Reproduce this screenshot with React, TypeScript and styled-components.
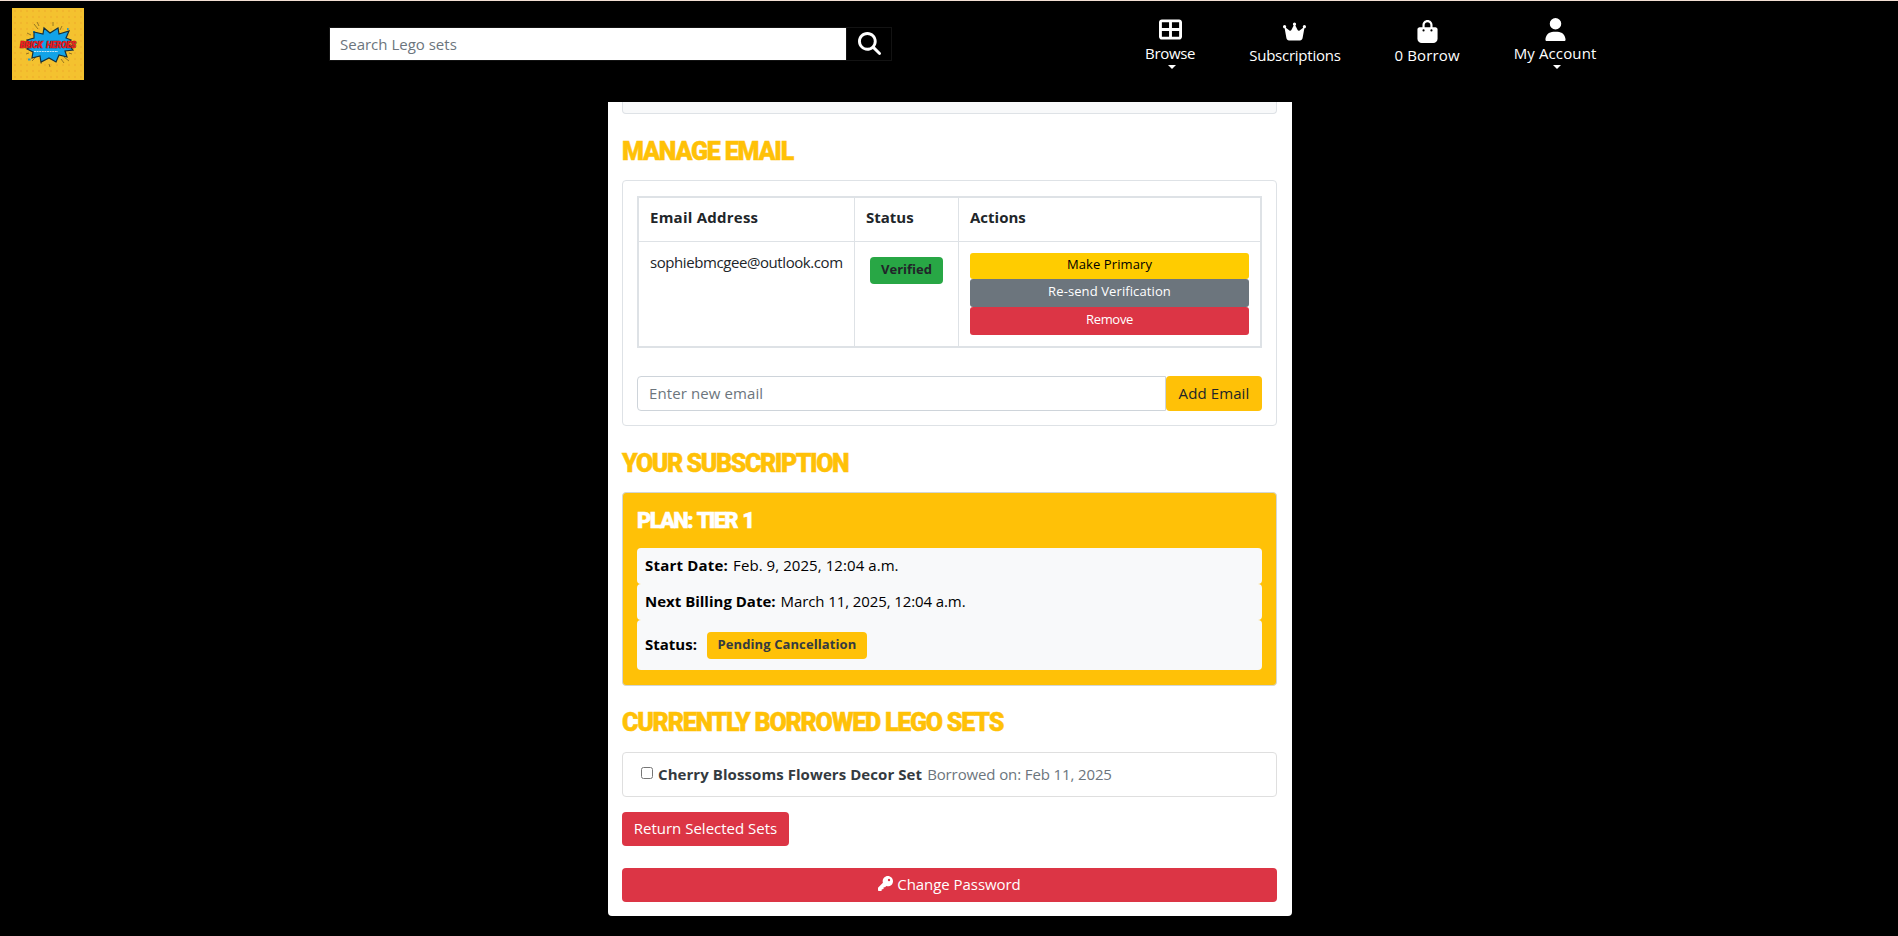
import React from "react";
import styled, { createGlobalStyle } from "styled-components";
import {
  FaBagShopping,
  FaCrown,
  FaKey,
  FaMagnifyingGlass,
  FaTableCellsLarge,
  FaUser,
} from "react-icons/fa6";

const GlobalStyle = createGlobalStyle`
  *, *::before, *::after { box-sizing: border-box; }
  body {
    margin: 0;
    background: #000;
    color: #212529;
    font: 15px/22px "Open Sans", "Noto Sans", sans-serif;
    overflow: hidden;
  }
  input, button { font: inherit; color: inherit; margin: 0; }
`;

const Page = styled.div`
  height: 936px;
  overflow: hidden;
`;

const Header = styled.header`
  display: flex;
  align-items: flex-start;
  height: 102px;
  border-top: 1px solid #f3dfd3;
  padding-left: 12px;
`;

const Logo = styled.svg`
  display: block;
  flex: none;
  width: 72px;
  height: 72px;
  margin-top: 7px;
`;

const Search = styled.form`
  display: flex;
  flex: none;
  width: 563px;
  height: 34px;
  margin: 26px 0 0 245px;
  border: 1px solid #131313;
`;

const SearchInput = styled.input`
  flex: 1;
  min-width: 0;
  border: 0;
  padding: 0 10px 1px;
  background: #fff;
  &::placeholder { color: #6c757d; opacity: 1; }
`;

const SearchButton = styled.button`
  display: flex;
  flex: none;
  align-items: center;
  justify-content: center;
  width: 45px;
  padding: 0 0 2px;
  border: 0;
  border-left: 1px solid #131313;
  background: #000;
  color: #fff;
  svg { width: 23px; height: 23px; }
`;

const Nav = styled.nav`
  display: flex;
  gap: 54px;
  margin-left: 253px;
  color: #fff;
`;

const NavItem = styled.a<{ $top: number }>`
  display: flex;
  flex-direction: column;
  align-items: center;
  padding-top: ${(p) => p.$top}px;
  white-space: nowrap;
  > svg { width: auto; height: 23px; margin-bottom: 1px; }
`;

const Label = styled.span<{ $track?: number }>`
  letter-spacing: ${(p) => p.$track ?? 0}px;
  white-space: nowrap;
`;

const Strong = styled(Label)`
  font-weight: 700;
`;

const Caret = styled.i`
  margin: 1px 0 0 4px;
  border: 4px solid transparent;
  border-top-color: #fff;
  border-bottom: 0;
`;

const Panel = styled.main`
  width: 684px;
  height: 814px;
  margin-left: 608px;
  padding: 0 15px 0 14px;
  border-radius: 0 0 4px 4px;
  background: #fff;
`;

const CardEnd = styled.div`
  height: 12px;
  border: 1px solid #dee2e6;
  border-top: 0;
  border-radius: 0 0 4px 4px;
  background: #f8f9fa;
`;

const Heading = styled.h2<{ $track: number }>`
  height: 30px;
  margin: 23px 0 13px;
  color: #ffc107;
  font: 900 25px/29px Roboto, sans-serif;
  letter-spacing: ${(p) => p.$track}px;
  text-transform: uppercase;
  white-space: nowrap;
  -webkit-text-stroke: 0.5px #ffc107;
`;

const EmailCard = styled.section`
  height: 246px;
  padding: 15px 14px 14px;
  border: 1px solid #dee2e6;
  border-radius: 4px;
`;

const EmailTable = styled.div`
  display: grid;
  grid-template-columns: 216px 104px 1fr;
  grid-template-rows: 44px 104px;
  border: 2px solid #dee2e6;
`;

const HeadCell = styled.div`
  padding: 8px 11px;
  border-bottom: 1px solid #dee2e6;
  font-weight: 700;
  &:not(:nth-child(3)) { border-right: 1px solid #dee2e6; }
`;

const Cell = styled.div`
  padding: 9px 11px;
  border-right: 1px solid #dee2e6;
`;

const StatusCell = styled(Cell)`
  padding: 15px;
`;

const ActionsCell = styled.div`
  display: flex;
  flex-direction: column;
  padding: 11px;
`;

const Badge = styled.span<{ $bg: string; $width: number; $track: number; $color?: string }>`
  display: block;
  flex: none;
  width: ${(p) => p.$width}px;
  height: 27px;
  border-radius: 4px;
  background: ${(p) => p.$bg};
  color: ${(p) => p.$color ?? "#212529"};
  font-size: 13px;
  font-weight: 700;
  line-height: 25px;
  letter-spacing: ${(p) => p.$track}px;
  text-align: center;
  white-space: nowrap;
`;

const ActionButton = styled.button<{ $bg: string; $compact?: boolean; $track?: number }>`
  height: ${(p) => (p.$compact ? 26 : 28)}px;
  padding: 0 0 3px;
  border: 0;
  border-radius: 3px;
  background: ${(p) => p.$bg};
  color: ${(p) => (p.$compact ? "#000" : "#fff")};
  font-size: 13px;
  line-height: ${(p) => (p.$compact ? 23 : 25)}px;
  letter-spacing: ${(p) => p.$track ?? 0}px;
`;

const AddRow = styled.form`
  display: flex;
  height: 35px;
  margin-top: 28px;
`;

const EmailInput = styled.input`
  width: 529px;
  padding: 0 11px 2px;
  border: 1px solid #ced4da;
  border-radius: 4px 0 0 4px;
  background: #fff;
  &::placeholder { color: #6c757d; opacity: 1; letter-spacing: 0.1px; }
`;

const AddButton = styled.button`
  width: 96px;
  padding: 0 0 2px;
  border: 0;
  border-radius: 4px;
  background: #ffc107;
  letter-spacing: 0.1px;
`;

const PlanCard = styled.section`
  height: 194px;
  margin-bottom: -1px;
  padding: 14px;
  border: 1px solid #d3d6d3;
  border-radius: 4px;
  background: #ffc107;
`;

const PlanTitle = styled.h3`
  margin: 0 0 13px;
  color: #fff;
  font: 900 22px/28px Roboto, sans-serif;
  letter-spacing: -1.7px;
  word-spacing: 1.5px;
  text-transform: uppercase;
  -webkit-text-stroke: 0.5px #fff;
`;

const PlanRow = styled.div<{ $tall?: boolean }>`
  display: flex;
  gap: ${(p) => (p.$tall ? 10 : 5)}px;
  height: ${(p) => (p.$tall ? 50 : 36)}px;
  padding: ${(p) => (p.$tall ? "12px" : "6px")} 8px;
  border-radius: 4px;
  background: #f8f9fa;
  color: #000;
`;

const StatusLabel = styled(Strong)`
  padding-top: 1px;
`;

const BorrowedRow = styled.label`
  display: flex;
  align-items: center;
  height: 45px;
  margin-top: 14px;
  padding: 0 18px 2px;
  border: 1px solid #dfdfdf;
  border-radius: 4px;
  color: #343a40;
`;

const Checkbox = styled.input`
  width: 12px;
  height: 12px;
  margin: 0 5px 1px 0;
`;

const BorrowedDate = styled(Label)`
  margin-left: 5px;
  color: #6c757d;
`;

const DangerButton = styled.button<{ $block?: boolean }>`
  display: flex;
  align-items: center;
  justify-content: center;
  gap: 4px;
  width: ${(p) => (p.$block ? "100%" : "167px")};
  height: 34px;
  margin-top: ${(p) => (p.$block ? 22 : 15)}px;
  padding: 0 0 3px;
  border: 0;
  border-radius: 4px;
  background: #dc3545;
  color: #fff;
  svg { width: 15px; height: 15px; }
`;

function BrandLogo() {
  return (
    <Logo viewBox="0 0 72 72" role="img" aria-label="Brick Heroes">
      <defs>
        <pattern id="dots" width="6" height="6" patternUnits="userSpaceOnUse">
          <circle cx="3" cy="3" r="1.2" fill="#f1b52d" />
        </pattern>
      </defs>
      <rect width="72" height="72" fill="#f4c22f" />
      <rect width="72" height="72" fill="url(#dots)" />
      <path
        d="M22 16l4 5M25 14l2 4M41 14v4M50 18l-2 4M15 25l4 2M52 49l5 4M49 51l3 4M37 56l1 3M30 52l-1 4M24 49l-4 4M17 45l-3 1M57 45l3 1"
        stroke="#80651c"
        strokeWidth=".8"
      />
      <path d="M21 24h2M55 21h1.6M16 51.5h2.6" stroke="#2c9cbd" strokeWidth="2" />
      <path
        d="M22 24l9 2 1-6 6 5 8-5 1 6 10-3-3 7 5 2-3 4 5 6-8 1 2 6-8-2-3 7-7-4-8 4-1-6-8 2 1-6-6-3 5-4-5-5 7-2z"
        fill="#12a3e8"
        stroke="#17313b"
        strokeWidth="1.2"
      />
      <text
        x="8"
        y="39.6"
        textLength="56"
        wordSpacing="2"
        fontFamily="Roboto, sans-serif"
        fontSize="8.4"
        fontStyle="italic"
        fontWeight="900"
        fill="#f01a20"
        stroke="#5a1219"
        strokeWidth=".7"
        paintOrder="stroke"
      >
        BRICK HEROES
      </text>
      <path d="M22 43.5h24" stroke="#bfe6f7" strokeWidth="1" strokeDasharray="2 .6" />
    </Logo>
  );
}

export default function App() {
  return (
    <Page>
      <GlobalStyle />
      <Header>
        <BrandLogo />
        <Search>
          <SearchInput placeholder="Search Lego sets" aria-label="Search" />
          <SearchButton type="button" aria-label="Submit search">
            <FaMagnifyingGlass />
          </SearchButton>
        </Search>
        <Nav>
          <NavItem $top={17}>
            <FaTableCellsLarge />
            <Label $track={-0.3}>Browse</Label>
            <Caret />
          </NavItem>
          <NavItem $top={19}>
            <FaCrown />
            <Label $track={-0.25}>Subscriptions</Label>
          </NavItem>
          <NavItem $top={19}>
            <FaBagShopping />
            <Label $track={0.13}>0 Borrow</Label>
          </NavItem>
          <NavItem $top={17}>
            <FaUser />
            <Label $track={0.12}>My Account</Label>
            <Caret />
          </NavItem>
        </Nav>
      </Header>

      <Panel>
        <CardEnd />

        <Heading $track={-1.18}>Manage Email</Heading>
        <EmailCard>
          <EmailTable>
            <HeadCell><Label $track={0.24}>Email Address</Label></HeadCell>
            <HeadCell>Status</HeadCell>
            <HeadCell>Actions</HeadCell>
            <Cell><Label $track={-0.42}>sophiebmcgee@outlook.com</Label></Cell>
            <StatusCell>
              <Badge $bg="#28a745" $width={73} $track={0}>Verified</Badge>
            </StatusCell>
            <ActionsCell>
              <ActionButton $bg="#ffcc00" $compact $track={0.1}>Make Primary</ActionButton>
              <ActionButton $bg="#6c757d" $track={0.1}>Re-send Verification</ActionButton>
              <ActionButton $bg="#dc3545" $track={-0.3}>Remove</ActionButton>
            </ActionsCell>
          </EmailTable>
          <AddRow>
            <EmailInput placeholder="Enter new email" aria-label="New email" />
            <AddButton type="button">Add Email</AddButton>
          </AddRow>
        </EmailCard>

        <Heading $track={-1.43}>Your Subscription</Heading>
        <PlanCard>
          <PlanTitle>Plan: Tier 1</PlanTitle>
          <PlanRow>
            <Strong $track={0.2}>Start Date:</Strong>
            <Label $track={0.07}>Feb. 9, 2025, 12:04 a.m.</Label>
          </PlanRow>
          <PlanRow>
            <Strong>Next Billing Date:</Strong>
            <Label $track={-0.1}>March 11, 2025, 12:04 a.m.</Label>
          </PlanRow>
          <PlanRow $tall>
            <StatusLabel>Status:</StatusLabel>
            <Badge $bg="#ffc107" $color="#343a40" $width={160} $track={0.1}>
              Pending Cancellation
            </Badge>
          </PlanRow>
        </PlanCard>

        <Heading $track={-1.22}>Currently Borrowed Lego Sets</Heading>
        <BorrowedRow>
          <Checkbox type="checkbox" />
          <Strong $track={0.07}>Cherry Blossoms Flowers Decor Set</Strong>
          <BorrowedDate $track={-0.12}>Borrowed on: Feb 11, 2025</BorrowedDate>
        </BorrowedRow>
        <DangerButton>Return Selected Sets</DangerButton>
        <DangerButton $block>
          <FaKey />
          <Label $track={-0.05}>Change Password</Label>
        </DangerButton>
      </Panel>
    </Page>
  );
}
